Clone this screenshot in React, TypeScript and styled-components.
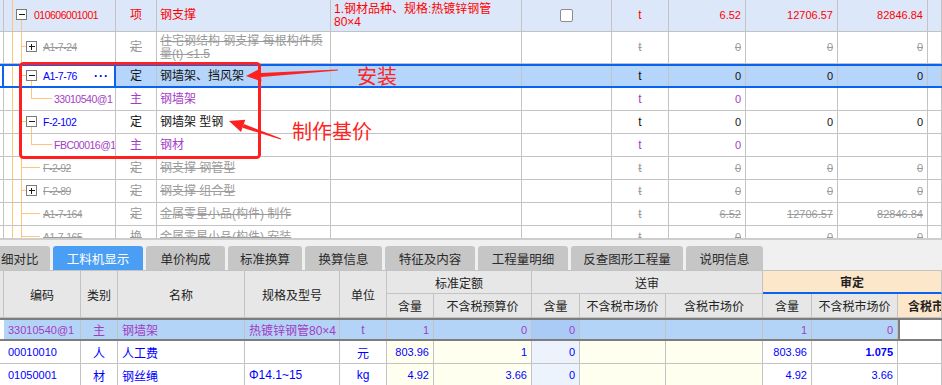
import React from 'react';
import styled, { createGlobalStyle, css } from 'styled-components';

type Tone = 'red' | 'blue' | 'purple' | 'gray' | 'ink';
type Level = 0 | 1 | 2;

const tones: Record<Tone, string> = {
    red: '#ff0000',
    blue: '#0000ff',
    purple: '#a33cc3',
    gray: '#9a9a9a',
    ink: '#111111',
};

const LINE = '#c3c3c3';
const ORANGE = '#ffc57f';
const FOCUS = '#0a62f0';

const topCols = '116px 41px 174px 191px 90px 57px 77px 92px 90px 1fr';
const bottomCols = '4px 77px 37px 127px 95px 47px 47px 98px 48px 86px 97px 49px 86px 1fr';

interface Item {
    level: Level;
    box?: '+' | '-';
    code: string;
    codeTone?: Tone;
    kind: string;
    name: string[];
    spec?: string[];
    tone: Tone;
    strike?: boolean;
    check?: boolean;
    unit: string;
    vals: string[];
    h: number;
    variant?: 'head' | 'selected';
    dots?: boolean;
}

const items: Item[] = [
    { level: 0, box: '-', code: '010606001001', kind: '项', name: ['钢支撑'], spec: ['1.钢材品种、规格:热镀锌钢管', '80×4'], tone: 'red', check: true, unit: 't', vals: ['6.52', '12706.57', '82846.84'], h: 32, variant: 'head' },
    { level: 1, box: '+', code: 'A1-7-24', kind: '定', name: ['住宅钢结构 钢支撑 每根构件质', '量(t) ≤1.5'], tone: 'gray', strike: true, unit: 't', vals: ['0', '0', '0'], h: 32 },
    { level: 1, box: '-', code: 'A1-7-76', codeTone: 'blue', kind: '定', name: ['钢墙架、挡风架'], tone: 'ink', unit: 't', vals: ['0', '0', '0'], h: 24, variant: 'selected', dots: true },
    { level: 2, code: '33010540@1', kind: '主', name: ['钢墙架'], tone: 'purple', unit: 't', vals: ['0', '', ''], h: 23 },
    { level: 1, box: '-', code: 'F-2-102', codeTone: 'blue', kind: '定', name: ['钢墙架 型钢'], tone: 'ink', unit: 't', vals: ['0', '0', '0'], h: 23 },
    { level: 2, code: 'FBC00016@1', kind: '主', name: ['钢材'], tone: 'purple', unit: 't', vals: ['0', '', ''], h: 23 },
    { level: 1, code: 'F-2-92', kind: '定', name: ['钢支撑 钢管型'], tone: 'gray', strike: true, unit: 't', vals: ['0', '0', '0'], h: 23 },
    { level: 1, box: '+', code: 'F-2-89', kind: '定', name: ['钢支撑 组合型'], tone: 'gray', strike: true, unit: 't', vals: ['0', '0', '0'], h: 23 },
    { level: 1, code: 'A1-7-164', kind: '定', name: ['金属零星小品(构件) 制作'], tone: 'gray', strike: true, unit: 't', vals: ['6.52', '12706.57', '82846.84'], h: 23 },
    { level: 1, code: 'A1-7-165', kind: '换', name: ['金属零星小品(构件) 安装'], tone: 'gray', strike: true, unit: 't', vals: ['0', '0', '0'], h: 23 },
];

const tabs = [
    { label: '细对比', w: 50, cut: true },
    { label: '工料机显示', w: 90, active: true },
    { label: '单价构成', w: 79 },
    { label: '标准换算', w: 74 },
    { label: '换算信息', w: 77 },
    { label: '特征及内容', w: 90 },
    { label: '工程量明细', w: 90 },
    { label: '反查图形工程量', w: 112 },
    { label: '说明信息', w: 77 },
];

type Shade = 'white' | 'yellow' | 'pale';
const shades: Shade[] = ['white', 'white', 'white', 'white', 'white', 'white', 'yellow', 'yellow', 'pale', 'yellow', 'yellow', 'white', 'white', 'white'];
const aligns: Array<'left' | 'center' | 'right'> = ['left', 'left', 'center', 'left', 'left', 'center', 'right', 'right', 'right', 'right', 'right', 'right', 'right', 'right'];
const numeric = [false, true, false, false, false, false, true, true, true, true, true, true, true, true];

const materials = [
    { tone: 'purple' as Tone, sel: true, cells: ['', '33010540@1', '主', '钢墙架', '热镀锌钢管80×4', 't', '1', '0', '0', '', '', '1', '0', ''] },
    { tone: 'blue' as Tone, cells: ['', '00010010', '人', '人工费', '', '元', '803.96', '1', '0', '', '', '803.96', '1.075', ''] },
    { tone: 'blue' as Tone, cells: ['', '01050001', '材', '钢丝绳', 'Φ14.1~15', 'kg', '4.92', '3.66', '0', '', '', '4.92', '3.66', ''] },
];

const GlobalStyle = createGlobalStyle`
    * { box-sizing: border-box; }
    html, body { margin: 0; padding: 0; background: #fff; }
`;

const Page = styled.div`
    position: relative;
    width: 942px;
    height: 385px;
    overflow: hidden;
    background: #fff;
    font-family: 'Liberation Sans', 'Noto Sans CJK SC', sans-serif;
    font-size: 12px;
`;

const TopTable = styled.div`
    height: 238px;
    overflow: hidden;
`;

const TopRow = styled.div<{ $h: number; $variant?: 'head' | 'selected' }>`
    display: grid;
    grid-template-columns: ${topCols};
    height: ${(p) => p.$h}px;
    background: ${(p) => (p.$variant === 'head' ? '#dce8f9' : p.$variant === 'selected' ? '#b5d5fb' : '#fff')};
    ${(p) =>
        p.$variant === 'selected' &&
        css`
            border-top: 2px solid ${FOCUS};
            border-bottom: 2px solid ${FOCUS};
        `}
`;

const Cell = styled.div<{ $align?: 'left' | 'center' | 'right'; $tone: Tone; $strike?: boolean; $flat?: boolean }>`
    display: flex;
    align-items: center;
    justify-content: ${(p) => (p.$align === 'center' ? 'center' : p.$align === 'right' ? 'flex-end' : 'flex-start')};
    padding: 0 ${(p) => (p.$align === 'right' ? '4px' : '3px')};
    border-right: 1px solid ${LINE};
    border-bottom: ${(p) => (p.$flat ? 'none' : `1px solid ${LINE}`)};
    color: ${(p) => tones[p.$tone]};
    text-decoration: ${(p) => (p.$strike ? 'line-through' : 'none')};
    white-space: nowrap;
    overflow: hidden;
    line-height: 13px;
`;

const TreeCell = styled(Cell)<{ $focus?: boolean }>`
    padding: 0;
    background: linear-gradient(${LINE}, ${LINE}) 3px 0 / 1px 100% no-repeat;
    ${(p) =>
        p.$focus &&
        css`
            background: linear-gradient(${FOCUS}, ${FOCUS}) 2px 0 / 2px 100% no-repeat, #fff;
            border-right: 2px solid ${FOCUS};
        `}
`;

const Num = styled.span<{ $bold?: boolean }>`
    font-family: 'Liberation Sans', sans-serif;
    font-size: 11px;
    font-weight: ${(p) => (p.$bold ? 700 : 400)};
`;

const Code = styled.span`
    font-family: 'Liberation Sans', sans-serif;
    font-size: 10.5px;
    letter-spacing: -0.5px;
`;

const Stack = styled.div`
    display: flex;
    flex-direction: column;
`;

const Dots = styled.span`
    margin-left: auto;
    margin-right: 5px;
    color: ${tones.blue};
    font-weight: 700;
    letter-spacing: 1px;
`;

const CheckBox = styled.span`
    width: 13px;
    height: 13px;
    border: 1px solid #8c8c8c;
    border-radius: 2px;
    background: #fff;
`;

const GuideSvg = styled.svg`
    flex: none;
    display: block;
`;

const Guide: React.FC<{ level: Level; box?: '+' | '-'; h: number }> = ({ level, box, h }) => {
    const m = Math.floor(h / 2) - 0.5;
    const w = level === 0 ? 34 : level === 1 ? 43 : 54;
    const bx = level === 0 ? 16 : 26;
    return (
        <GuideSvg width={w} height={h} shapeRendering="crispEdges">
            <g stroke={ORANGE} fill="none">
                <line x1={12.5} y1={0} x2={12.5} y2={h} />
                {level > 0 && <line x1={21.5} y1={0} x2={21.5} y2={h} />}
                {level === 1 && <line x1={21.5} y1={m} x2={box ? bx : 40} y2={m} />}
                {level === 2 && <line x1={31.5} y1={0} x2={31.5} y2={m} />}
                {level === 2 && <line x1={31.5} y1={m} x2={52} y2={m} />}
                {box === '-' && <line x1={bx + 5.5} y1={m + 5} x2={bx + 5.5} y2={h} />}
            </g>
            {box && (
                <g stroke="#1a1a1a">
                    <rect x={bx + 0.5} y={m - 5} width={10} height={10} fill="#fff" stroke="#7a7a7a" />
                    <line x1={bx + 3} y1={m} x2={bx + 9} y2={m} />
                    {box === '+' && <line x1={bx + 5.5} y1={m - 3} x2={bx + 5.5} y2={m + 3} />}
                </g>
            )}
        </GuideSvg>
    );
};

const Lines: React.FC<{ lines: string[] }> = ({ lines }) =>
    lines.length > 1 ? (
        <Stack>
            {lines.map((l) => (
                <span key={l}>{l}</span>
            ))}
        </Stack>
    ) : (
        <span>{lines[0]}</span>
    );

const TopLine: React.FC<{ item: Item }> = ({ item }) => {
    const sel = item.variant === 'selected';
    const inner = sel ? item.h - 4 : item.h - 1;
    const base = { $tone: item.tone, $strike: item.strike, $flat: sel };
    return (
        <TopRow $h={item.h} $variant={item.variant}>
            <TreeCell {...base} $tone={item.codeTone || item.tone} $focus={sel}>
                <Guide level={item.level} box={item.box} h={inner} />
                <Code>{item.code}</Code>
                {item.dots && <Dots>···</Dots>}
            </TreeCell>
            <Cell {...base} $align="center">{item.kind}</Cell>
            <Cell {...base}>
                <Lines lines={item.name} />
            </Cell>
            <Cell {...base}>{item.spec && <Lines lines={item.spec} />}</Cell>
            <Cell {...base} $align="center">{item.check && <CheckBox />}</Cell>
            <Cell {...base} $align="center">{item.unit}</Cell>
            {item.vals.map((v, i) => (
                <Cell key={i} {...base} $align="right">
                    <Num>{v}</Num>
                </Cell>
            ))}
            <Cell {...base} />
        </TopRow>
    );
};

const Overlay = styled.svg`
    position: absolute;
    left: 0;
    top: 0;
    pointer-events: none;
`;

const Note = styled.span<{ $x: number; $y: number }>`
    position: absolute;
    left: ${(p) => p.$x}px;
    top: ${(p) => p.$y}px;
    font-family: 'Noto Sans CJK SC', sans-serif;
    font-size: 20px;
    line-height: 24px;
    color: #ff2424;
    pointer-events: none;
`;

// tapered shaft + triangular head, from tail (ex,ey) to tip (tx,ty)
const arrow = (tx: number, ty: number, ex: number, ey: number) => {
    const len = Math.hypot(ex - tx, ey - ty);
    const ux = (ex - tx) / len;
    const uy = (ey - ty) / len;
    const nx = -uy;
    const ny = ux;
    const bx = tx + 15 * ux;
    const by = ty + 15 * uy;
    const pt = (x: number, y: number) => `${x.toFixed(1)},${y.toFixed(1)}`;
    return {
        head: [pt(tx, ty), pt(bx + 6.5 * nx, by + 6.5 * ny), pt(bx - 6.5 * nx, by - 6.5 * ny)].join(' '),
        shaft: [pt(bx + 2 * nx, by + 2 * ny), pt(ex + 0.6 * nx, ey + 0.6 * ny), pt(ex - 0.6 * nx, ey - 0.6 * ny), pt(bx - 2 * nx, by - 2 * ny)].join(' '),
    };
};

const Annotations: React.FC = () => {
    const a1 = arrow(246, 76, 338, 70);
    const a2 = arrow(229, 121, 281, 139);
    return (
        <>
            <Overlay width={942} height={240}>
                <rect x={20.5} y={63.5} width={239} height={94} rx={3} fill="none" stroke="#ff2020" strokeWidth={3} />
                <g fill="#ff2020">
                    <polygon points={a1.head} />
                    <polygon points={a1.shaft} />
                    <polygon points={a2.head} />
                    <polygon points={a2.shaft} />
                </g>
            </Overlay>
            <Note $x={357} $y={64}>安装</Note>
            <Note $x={292} $y={119}>制作基价</Note>
        </>
    );
};

const TabBar = styled.div`
    display: flex;
    gap: 3px;
    height: 32px;
    padding-top: 6px;
    background: #f0f0f0;
    border-top: 2px solid #cdcdcd;
`;

const Tab = styled.div<{ $w: number; $active?: boolean; $cut?: boolean }>`
    flex: none;
    width: ${(p) => p.$w}px;
    display: flex;
    align-items: center;
    justify-content: ${(p) => (p.$cut ? 'flex-start' : 'center')};
    padding-left: ${(p) => (p.$cut ? '1px' : '0')};
    background: ${(p) => (p.$active ? '#4a9ff5' : '#c6c6c6')};
    color: ${(p) => (p.$active ? '#fff' : '#2b2b2b')};
    border-radius: ${(p) => (p.$cut ? '0 3px 0 0' : '3px 3px 0 0')};
    font-family: 'Noto Sans CJK SC', sans-serif;
    font-size: 12.5px;
`;

const Head = styled.div`
    display: grid;
    grid-template-columns: ${bottomCols};
    grid-template-rows: 23px 24px;
    border-top: 1px solid ${LINE};
    background: #e7e7e7;
    font-family: 'Noto Sans CJK SC', sans-serif;
`;

const HeadCell = styled.div<{ $col: string; $row: string; $audit?: boolean; $mark?: boolean; $cut?: boolean }>`
    grid-column: ${(p) => p.$col};
    grid-row: ${(p) => p.$row};
    display: flex;
    align-items: center;
    justify-content: ${(p) => (p.$cut ? 'flex-start' : 'center')};
    padding-left: ${(p) => (p.$cut ? '10px' : '0')};
    white-space: nowrap;
    overflow: hidden;
    color: #222;
    border-right: 1px solid ${LINE};
    border-bottom: ${(p) => (p.$mark ? `2px solid ${FOCUS}` : `1px solid ${LINE}`)};
    ${(p) =>
        p.$audit &&
        css`
            background: #fde7cb;
            font-weight: 700;
        `}
`;

const DataRow = styled.div<{ $sel?: boolean }>`
    display: grid;
    grid-template-columns: ${bottomCols};
    height: 23px;
    ${(p) =>
        p.$sel &&
        css`
            border-top: 2px solid #7d7d7d;
            border-bottom: 2px solid #7d7d7d;
        `}
`;

const shadeBg: Record<Shade, string> = { white: '#fff', yellow: '#fffff0', pale: '#edf3fd' };

const DataCell = styled.div<{ $shade: Shade; $sel?: boolean; $deep?: boolean; $focus?: boolean; $lead?: boolean; $tone: Tone; $align: 'left' | 'center' | 'right' }>`
    display: flex;
    align-items: center;
    justify-content: ${(p) => (p.$align === 'center' ? 'center' : p.$align === 'right' ? 'flex-end' : 'flex-start')};
    padding: 0 ${(p) => (p.$align === 'center' ? '0' : '4px')};
    white-space: nowrap;
    overflow: hidden;
    color: ${(p) => tones[p.$tone]};
    background: ${(p) => (p.$focus || p.$lead ? '#fff' : p.$deep ? '#a9cbf6' : p.$sel ? '#b4d4f7' : shadeBg[p.$shade])};
    border-right: 1px solid ${LINE};
    border-bottom: ${(p) => (p.$sel ? 'none' : `1px solid ${LINE}`)};
    ${(p) =>
        p.$focus &&
        css`
            border-left: 2px solid #7d7d7d;
        `}
    ${(p) =>
        p.$lead &&
        p.$sel &&
        css`
            border-right: 2px solid ${FOCUS};
        `}
`;

export default function App() {
    return (
        <Page>
            <GlobalStyle />
            <TopTable>
                {items.map((it) => (
                    <TopLine key={it.code} item={it} />
                ))}
            </TopTable>
            <Annotations />
            <TabBar>
                {tabs.map((t) => (
                    <Tab key={t.label} $w={t.w} $active={t.active} $cut={t.cut}>
                        {t.label}
                    </Tab>
                ))}
            </TabBar>
            <Head>
                <HeadCell $col="1" $row="1 / 3" />
                <HeadCell $col="2" $row="1 / 3">编码</HeadCell>
                <HeadCell $col="3" $row="1 / 3">类别</HeadCell>
                <HeadCell $col="4" $row="1 / 3">名称</HeadCell>
                <HeadCell $col="5" $row="1 / 3">规格及型号</HeadCell>
                <HeadCell $col="6" $row="1 / 3">单位</HeadCell>
                <HeadCell $col="7 / 9" $row="1">标准定额</HeadCell>
                <HeadCell $col="9 / 12" $row="1">送审</HeadCell>
                <HeadCell $col="12 / 15" $row="1" $audit $mark>审定</HeadCell>
                <HeadCell $col="7" $row="2">含量</HeadCell>
                <HeadCell $col="8" $row="2">不含税预算价</HeadCell>
                <HeadCell $col="9" $row="2">含量</HeadCell>
                <HeadCell $col="10" $row="2">不含税市场价</HeadCell>
                <HeadCell $col="11" $row="2">含税市场价</HeadCell>
                <HeadCell $col="12" $row="2">含量</HeadCell>
                <HeadCell $col="13" $row="2">不含税市场价</HeadCell>
                <HeadCell $col="14" $row="2" $audit $cut>含税市场价</HeadCell>
            </Head>
            {materials.map((r) => (
                <DataRow key={r.cells[1]} $sel={r.sel}>
                    {r.cells.map((c, i) => (
                        <DataCell
                            key={i}
                            $shade={shades[i]}
                            $sel={r.sel}
                            $deep={r.sel && i === 8}
                            $focus={r.sel && i === 13}
                            $lead={i === 0}
                            $tone={r.tone}
                            $align={aligns[i]}
                        >
                            {numeric[i] ? <Num $bold={c === '1.075'}>{c}</Num> : c}
                        </DataCell>
                    ))}
                </DataRow>
            ))}
        </Page>
    );
}
